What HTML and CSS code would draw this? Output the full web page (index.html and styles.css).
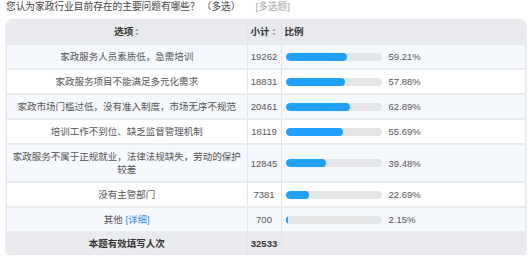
FILE: index.html
```html
<!DOCTYPE html>
<html lang="zh">
<head>
<meta charset="utf-8">
<link rel="stylesheet" href="styles.css">
</head>
<body>
<div class="page">
  <div class="title">您认为家政行业目前存在的主要问题有哪些？<span class="multi">（多选）</span><span class="tag">[多选题]</span></div>
  <div class="card">
    <table class="grid">
      <colgroup><col class="c1"><col class="c2"><col class="c3"></colgroup>
      <thead>
        <tr class="head">
          <th class="opt">选项<svg class="sort" viewBox="0 0 4 8" width="4" height="8"><path d="M2 0.5L3.8 3H0.2Z M2 7.5L3.8 5H0.2Z" fill="#9aa0a6"/></svg></th>
          <th class="num-h">小计<svg class="sort" viewBox="0 0 4 8" width="4" height="8"><path d="M2 0.5L3.8 3H0.2Z M2 7.5L3.8 5H0.2Z" fill="#9aa0a6"/></svg></th>
          <th class="ratio-h">比例</th>
        </tr>
      </thead>
      <tbody>
        <tr class="alt"><td class="opt">家政服务人员素质低，急需培训</td><td class="num">19262</td><td class="ratio"><div class="bar"><div class="track"><div class="fill" style="width:61px"></div></div><span class="pct">59.21%</span></div></td></tr>
        <tr><td class="opt">家政服务项目不能满足多元化需求</td><td class="num">18831</td><td class="ratio"><div class="bar"><div class="track"><div class="fill" style="width:59px"></div></div><span class="pct">57.88%</span></div></td></tr>
        <tr class="alt"><td class="opt">家政市场门槛过低，没有准入制度，市场无序不规范</td><td class="num">20461</td><td class="ratio"><div class="bar"><div class="track"><div class="fill" style="width:64px"></div></div><span class="pct">62.89%</span></div></td></tr>
        <tr><td class="opt">培训工作不到位、缺乏监督管理机制</td><td class="num">18119</td><td class="ratio"><div class="bar"><div class="track"><div class="fill" style="width:57px"></div></div><span class="pct">55.69%</span></div></td></tr>
        <tr class="alt tall"><td class="opt">家政服务不属于正规就业，法律法规缺失，劳动的保护较差</td><td class="num">12845</td><td class="ratio"><div class="bar"><div class="track"><div class="fill" style="width:40px"></div></div><span class="pct">39.48%</span></div></td></tr>
        <tr><td class="opt">没有主管部门</td><td class="num">7381</td><td class="ratio"><div class="bar"><div class="track"><div class="fill" style="width:23px"></div></div><span class="pct">22.69%</span></div></td></tr>
        <tr class="alt"><td class="opt">其他 <a class="link">[详细]</a></td><td class="num">700</td><td class="ratio"><div class="bar"><div class="track"><div class="fill thin" style="width:2px"></div></div><span class="pct">2.15%</span></div></td></tr>
      </tbody>
      <tfoot>
        <tr class="foot"><td class="opt">本题有效填写人次</td><td class="num">32533</td><td class="ratio"></td></tr>
      </tfoot>
    </table>
  </div>
</div>
</body>
</html>
```
FILE: styles.css
```css
html, body {
  margin: 0;
  padding: 0;
  background: #ffffff;
}
body {
  font-family: "Liberation Sans", "Noto Sans CJK SC", sans-serif;
  font-size: 9.5px;
  color: #444;
}
.page {
  padding: 0 5px 0 6px;
}
.title {
  height: 19px;
  line-height: 14px;
  color: #444;
  font-size: 9.7px;
  white-space: nowrap;
}
.title .multi {
  margin-left: 2px;
}
.title .tag {
  margin-left: 15px;
  color: #a6a6a6;
}
.card {
  width: 520px;
  border-radius: 6px;
  overflow: hidden;
  box-shadow: 0 1px 2px rgba(0,0,0,0.18);
  border: 1px solid #e3e5e8;
  box-sizing: border-box;
}
.grid {
  width: 100%;
  border-collapse: collapse;
  table-layout: fixed;
}
.c1 { width: 240px; }
.c2 { width: 34px; }
.grid th, .grid td {
  padding: 0 4px;
  border-left: 1px solid #e2e4e7;
  border-top: 2px solid #e8eaed;
  height: 23px;
  line-height: 13px;
}
.grid th:first-child, .grid td:first-child {
  border-left: none;
}
.head th {
  background: #e8eaed;
  color: #333;
  font-weight: bold;
  border-top: none;
  height: 23px;
}
.head .opt { text-align: center; }
.head .num-h, .head .ratio-h { text-align: left; padding-left: 3px; }
.sort {
  margin-left: 2px;
  vertical-align: -1px;
}
td.opt {
  text-align: center;
  color: #555;
}
td.num {
  text-align: center;
  color: #555;
  padding: 0;
}
tr.alt td {
  background: #f5f8fc;
}
tr.tall td {
  height: 36px;
}
.bar {
  display: flex;
  align-items: center;
}
.track {
  width: 96px;
  height: 8px;
  border-radius: 4px;
  background: #e3e4e6;
  overflow: hidden;
}
.fill {
  height: 8px;
  border-radius: 4px;
  background: #1fa0f9;
}
.fill.thin {
  border-radius: 1px;
}
.pct {
  margin-left: 7px;
  color: #555;
}
.link {
  color: #3a8ee6;
}
.foot td {
  background: #e8eaed;
  font-weight: bold;
  color: #333;
  height: 21px;
}
```
